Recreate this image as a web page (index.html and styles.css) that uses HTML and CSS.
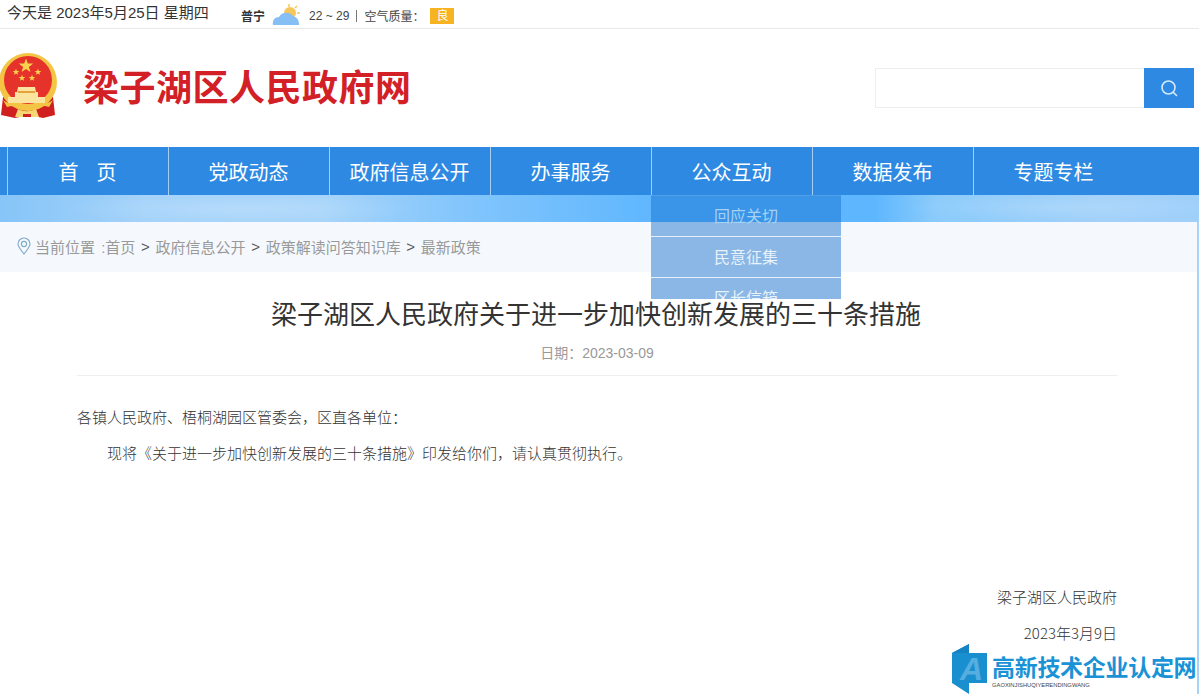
FILE: index.html
```html
<!DOCTYPE html>
<html lang="zh-CN">
<head>
<meta charset="utf-8">
<title>梁子湖区人民政府关于进一步加快创新发展的三十条措施</title>
<link rel="stylesheet" href="styles.css">
</head>
<body>
<div class="topbar">
  <span class="today">今天是 2023年5月25日 星期四</span>
  <div class="weather">
    <b class="city">普宁</b>
    <svg class="wicon" width="28" height="22" viewBox="0 0 28 22"><g stroke="#f5c75a" stroke-width="1.5"><path d="M17 4V1M23 5l2-2M25 10h3"/></g><circle cx="18" cy="10" r="6" fill="#f5c75a"/><path d="M1 22c-1-5 2-8 6-8 2-5 11-6 14-1 4 1 6 4 6 9z" fill="#85bff5"/></svg>
    <span class="temp">22 ~ 29</span>
    <i class="pipe"></i>
    <span class="aq">空气质量：</span>
    <span class="aqi">良</span>
  </div>
</div>
<header class="masthead">
  <div class="brand">
    <svg class="emblem" width="60" height="66" viewBox="0 0 60 66">
      <defs><path id="star" d="M0-5 1.200-1.600 4.800-1.600 1.900.6 3 4 0 2 -3 4 -1.900.6 -4.800-1.600 -1.200-1.600z" fill="#f9d34f"/></defs>
      <path d="M4 44 2 62l14 3 14-3 14 3 12-3-2-18z" fill="#cf1f1e"/>
      <circle cx="29" cy="29" r="29" fill="#f4c545"/>
      <circle cx="29" cy="27" r="24" fill="#e5322b"/>
      <use href="#star" transform="translate(27 13) scale(1.500)"/>
      <use href="#star" transform="translate(17 19) scale(.7)"/>
      <use href="#star" transform="translate(39 19) scale(.7)"/>
      <use href="#star" transform="translate(23 25) scale(.7)"/>
      <use href="#star" transform="translate(33 25) scale(.7)"/>
      <path d="M19 34h17l1 5h2v5h7v6H9v-6h7v-5h2z" fill="#fbe3a0"/>
      <path d="M19 38h17v2H19z" fill="#e5a23a"/>
      <path d="M4 47c10 8 40 8 50 0l-4 7c-5-2-9-1-12 1-5 3-10 3-15 0-4-2-9-3-15-1z" fill="#f4c545"/>
      <path d="M19 56c6 3 12 3 18 0l3 8H16z" fill="#f7d675"/>
      <path d="M24 61h8v3h-8z" fill="#cf1f1e"/>
    </svg>
    <h1 class="sitename">梁子湖区人民政府网</h1>
  </div>
  <form class="search">
    <div class="search-input"></div>
    <div class="search-btn">
      <svg width="20" height="20" viewBox="0 0 20 20" fill="none" stroke="#d6e9fb" stroke-width="1.6"><circle cx="9.500" cy="9.500" r="6.500"/><path d="M14.500 14.500l3 3" stroke-linecap="round"/></svg>
    </div>
  </form>
</header>
<nav class="nav">
  <a class="nav-item first">首&nbsp;&nbsp;&nbsp;页</a>
  <a class="nav-item">党政动态</a>
  <a class="nav-item">政府信息公开</a>
  <a class="nav-item">办事服务</a>
  <a class="nav-item">公众互动</a>
  <a class="nav-item">数据发布</a>
  <a class="nav-item">专题专栏</a>
</nav>
<div class="dropdown">
  <a class="drop-item faint">回应关切</a>
  <a class="drop-item">民意征集</a>
  <a class="drop-item">区长信箱</a>
</div>
<div class="sky"></div>
<div class="sheet">
  <div class="crumbs">
    <svg class="pin" width="14" height="18" viewBox="0 0 14 18" fill="none" stroke="#7fa9c9" stroke-width="1.100"><path d="M7 17C3 12 1 9.500 1 7a6 6 0 0 1 12 0c0 2.500-2 5-6 10z"/><circle cx="7" cy="7" r="2.600"/></svg>
    <span class="crumb-here">当前位置 :首页</span><span class="sep">&gt;</span><span>政府信息公开</span><span class="sep">&gt;</span><span>政策解读问答知识库</span><span class="sep">&gt;</span><span>最新政策</span>
  </div>
  <article class="article">
    <h2 class="title">梁子湖区人民政府关于进一步加快创新发展的三十条措施</h2>
    <div class="date">日期：2023-03-09</div>
    <div class="body">
      <p class="salute">各镇人民政府、梧桐湖园区管委会，区直各单位：</p>
      <p class="lead">现将《关于进一步加快创新发展的三十条措施》印发给你们，请认真贯彻执行。</p>
      <p class="sign">梁子湖区人民政府</p>
      <p class="sign">2023年3月9日</p>
    </div>
  </article>
</div>
<div class="watermark">
  <svg width="35" height="50" viewBox="0 0 35 50"><path d="M0 9 17 0v9h18v30H17v11L0 39z" fill="#1a8fd0"/><path d="M17 0v9H6L0 9z" fill="#1583c2"/><text class="wm-a" x="8" y="36">A</text></svg>
  <div class="wm-text">
    <div class="wm-cn">高新技术企业认定网</div>
    <div class="wm-en">GAOXINJISHUQIYERENDINGWANG</div>
  </div>
</div>
</body>
</html>
```
FILE: styles.css
```css
* { box-sizing: border-box; }
html, body { margin: 0; padding: 0; }
body {
  position: relative;
  width: 1199px;
  height: 694px;
  overflow: hidden;
  background: #fff;
  font-family: "Liberation Sans", "Noto Sans CJK SC", sans-serif;
  color: #333;
}
.topbar {
  height: 29px;
  border-bottom: 1px solid #e9e9e9;
  display: flex;
  padding-left: 7px;
}
.today { font-size: 15px; line-height: 25px; color: #333; width: 234px; }
.weather { display: flex; align-items: center; height: 28px; font-size: 12px; color: #444; }
.city { font-weight: 700; color: #333; margin: 3px 7px 0 0; }
.wicon { margin: 3px 9px 3px 0; align-self: flex-end; }
.temp { font-size: 12px; color: #444; margin-top: 3px; }
.pipe { width: 1px; height: 12px; background: #777; margin: 3px 7px 0; }
.aq { width: 66px; margin-top: 3px; }
.aqi { width: 24px; height: 16px; background: #f7b321; color: #fff; text-align: center; line-height: 16px; font-size: 12px; margin-top: 3px; }
.masthead {
  height: 118px;
  display: flex;
  justify-content: space-between;
  padding-right: 5px;
}
.brand { display: flex; align-items: flex-start; }
.emblem { margin-left: -1px; margin-top: 24px; }
.sitename {
  margin: 38px 0 0 24px;
  font-size: 36px;
  line-height: 44px;
  font-weight: 700;
  color: #d32026;
  white-space: nowrap;
  letter-spacing: 0.500px;
}
.search { display: flex; margin-top: 39px; height: 40px; }
.search-input { width: 269px; border: 1px solid #eee; border-right: 0; }
.search-btn { width: 50px; background: #2e89e2; display: flex; align-items: center; justify-content: center; }
.nav {
  height: 48px;
  background: #2e89e2;
  display: flex;
  padding-left: 7px;
}
.nav-item {
  width: 161px;
  padding-right: 1px;
  border-left: 1px solid #a6cef3;
  text-align: center;
  color: #fff;
  font-size: 20px;
  line-height: 52px;
}
.nav-item.first { word-spacing: .5px; }
.sky {
  height: 27px;
  background:
    radial-gradient(ellipse 180px 16px at 240px 14px, rgba(255,255,255,.18), transparent),
    radial-gradient(ellipse 160px 14px at 1060px 12px, rgba(255,255,255,.14), transparent),
    linear-gradient(90deg, #86c5f8 0, #a3d2fa 12%, #a6d4fa 27%, #84c6fc 38%, #60b7fe 54%, #5eb7fe 73%, #8bcbfb 78%, #a2d1fa 92%, #9fd0fa 100%);
}
.dropdown {
  position: absolute;
  left: 651px;
  top: 195px;
  width: 190px;
  height: 104px;
  overflow: hidden;
  z-index: 2;
  border-top: 1px solid #4f9fe8;
  background: linear-gradient(#3a94e8 0, #3a94e8 26px, #8ab7e5 26px);
}
.drop-item {
  display: block;
  height: 41px;
  border-bottom: 1px solid #e6f0fa;
  text-align: center;
  font-size: 16px;
  font-weight: 400;
  line-height: 42px;
  color: #e8f2fb;
}
.drop-item.faint { color: #a5d2f2; }
.sheet {
  width: 1199px;
  height: 472px;
  border-right: 2px solid #a9d3f6;
}
.crumbs {
  height: 50px;
  padding: 0 0 2px 17px;
  background: #f5f9fe;
  display: flex;
  align-items: center;
  font-size: 15px;
  color: #999;
}
.crumb-here { word-spacing: 2px; }
.pin { margin-right: 4px; margin-top: -1px; }
.sep { color: #555; margin: 0 5.700px; font-size: 15px; }
.article { width: 1040px; margin-left: 77px; }
.title {
  margin: 0;
  padding: 25px 2px 0 0;
  font-size: 26px;
  line-height: 36px;
  font-weight: 400;
  color: #333;
  text-align: center;
}
.date {
  text-align: center;
  font-size: 14px;
  color: #999;
  line-height: 20px;
  padding: 10px 0 12px;
  border-bottom: 1px solid #eee;
  height: 43px;
}
.body { font-family: "Noto Sans CJK SC", sans-serif; font-size: 15px; font-weight: 300; color: #333; }
.body p { margin: 0; line-height: 35px; }
.salute { padding: 23px 0 1px; height: 59px; }
.lead { padding-left: 30px; height: 144px; }
.sign { text-align: right; height: 36px; }
.watermark {
  position: absolute;
  left: 952px;
  top: 644px;
  display: flex;
  gap: 5px;
  z-index: 3;
}
.wm-a { font: italic 700 32px "Liberation Sans", sans-serif; fill: #55ade0; }
.wm-text { padding-top: 11px; }
.wm-cn { font-size: 23px; line-height: 26px; font-weight: 700; color: #1a93d6; white-space: nowrap; letter-spacing: -.3px; }
.wm-en { font-size: 5.800px; line-height: 8px; color: #444; white-space: nowrap; }
```
